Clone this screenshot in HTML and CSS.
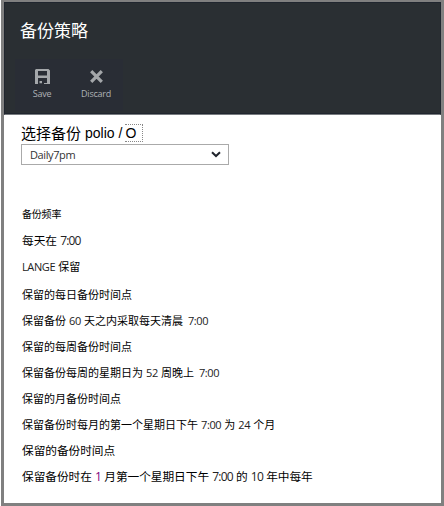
FILE: index.html
```html
<!DOCTYPE html>
<html lang="zh-CN">
<head>
<meta charset="utf-8">
<title>备份策略</title>
<link rel="stylesheet" href="styles.css">
</head>
<body>
<div class="blade">
  <header class="header">
    <h1 class="title">备份策略</h1>
    <div class="toolbar">
      <button class="tool">
        <svg class="icon" width="15" height="15" viewBox="0 0 15 15"><path fill="#a4a7aa" fill-rule="evenodd" d="M1 0h12.500L15 1.500V15H0V1zM3 2v4.500h9V2zM3 9v6h9V9z"/><path fill="#a4a7aa" d="M4.500 12h2.500v2.200H4.500zM9 14h3v1H9z"/></svg>
        <span>Save</span>
      </button>
      <button class="tool">
        <svg class="icon" width="15" height="15" viewBox="0 0 15 15"><path d="M2.200 2.200l10.600 10.600M12.800 2.200l-10.600 10.600" stroke="#a4a7aa" stroke-width="3.200" fill="none"/></svg>
        <span>Discard</span>
      </button>
    </div>
  </header>
  <main class="content">
    <div class="field-label"><span class="label-cjk">选择备份</span><span>polio /</span><span class="mark">O</span></div>
    <div class="select"><span>Daily7pm</span><svg width="10" height="7" viewBox="0 0 10 7"><path d="M1 1.200l4 3.800 4-3.800" fill="none" stroke="#20242c" stroke-width="2"/></svg></div>
    <div class="details">
      <p class="row small">备份频率</p>
      <p class="row large">每天在 <b>7:00</b></p>
      <p class="row lange"><b>LANGE</b> 保留</p>
      <p class="row">保留的每日备份时间点</p>
      <p class="row">保留备份 <b>60</b> 天之内采取每天清晨 <b class="wide">7:00</b></p>
      <p class="row">保留的每周备份时间点</p>
      <p class="row">保留备份每周的星期日为 <b>52</b> 周晚上 <b class="wide">7:00</b></p>
      <p class="row">保留的月备份时间点</p>
      <p class="row">保留备份时每月的第一个星期日下午 <b>7:00</b> 为 <b>24</b> 个月</p>
      <p class="row large">保留的备份时间点</p>
      <p class="row large">保留备份时在 <b class="one">1</b> 月第一个星期日下午 <b>7:00</b> 的 <b>10</b> 年中每年</p>
    </div>
  </main>
</div>
</body>
</html>
```
FILE: styles.css
```css
* { box-sizing: border-box; }
body {
  margin: 0;
  background: #fff;
  font-family: "Liberation Sans", "Noto Sans CJK SC", sans-serif;
  color: #000;
}
.blade {
  height: 506px;
  margin-left: 1px;
  border: 3px solid #808080;
  border-top-width: 2px;
  background: #fff;
}
.header {
  height: 113px;
  padding: 17px 0 0 12px;
  background: #2a2f33;
  border: 1px solid #20262f;
  border-bottom: 1px solid #777b7f;
  box-shadow: inset 0 -1px #20262f;
}
.title {
  margin: 0 0 0 3px;
  font-size: 17px;
  line-height: 24px;
  font-weight: 400;
  color: #fff;
}
.toolbar {
  display: flex;
  width: 108px;
  height: 52px;
  margin-top: 15px;
  margin-left: -2px;
  background: #292d35;
}
.tool {
  display: flex;
  flex-direction: column;
  align-items: center;
  width: 54px;
  padding: 10px 0 0;
  border: 0;
  background: none;
  color: #aeb1b5;
  font: 9px/12px "Open Sans", sans-serif;
  letter-spacing: -0.25px;
}
.icon { margin-bottom: 4px; }
.content { padding: 7px 0 0 17px; }
.field-label {
  display: flex;
  align-items: center;
  height: 21px;
  font-size: 14px;
}
.label-cjk { font-size: 15px; margin-right: 4px; }
.mark {
  width: 18px;
  height: 18px;
  margin-left: 3px;
  line-height: 17px;
  border: 1px dotted #888;
  border-left: 0;
}
.select {
  display: flex;
  align-items: center;
  justify-content: space-between;
  width: 208px;
  height: 21px;
  margin-top: 1px;
  padding: 0 7px 0 8px;
  border: 1px solid #aaa;
  color: #333;
  font: 11px "Open Sans", sans-serif;
  letter-spacing: -0.4px;
}
.details { margin: 37px 0 0 1px; }
.row {
  margin: 0;
  height: 26px;
  line-height: 26px;
  font-size: 11px;
  letter-spacing: 0;
  white-space: nowrap;
}
.row b {
  font: 11px "Open Sans", "Liberation Sans", sans-serif;
  letter-spacing: -0.4px;
  color: #222;
}
.row .wide { margin-left: 2px; }
.row .one { color: #800080; }
.small { font-size: 10px; letter-spacing: -0.2px; }
.large { font-size: 11.700px; letter-spacing: -0.05px; }
.large b { font-size: 12px; letter-spacing: -0.8px; }
.lange { height: 28px; }
```
